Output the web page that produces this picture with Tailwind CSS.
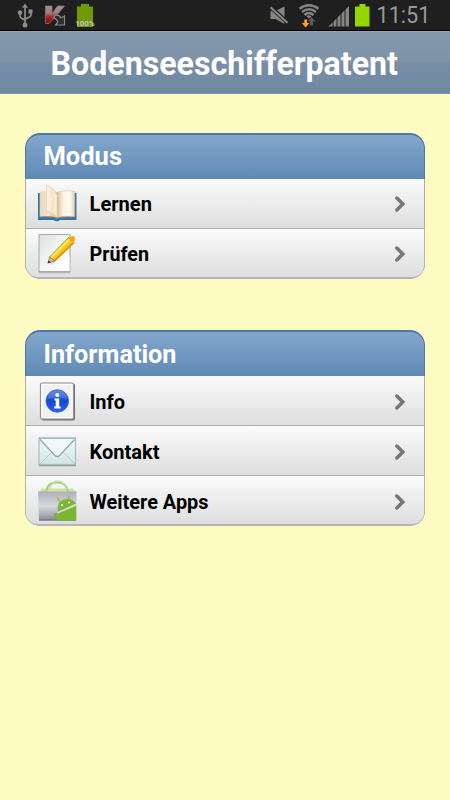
<!DOCTYPE html>
<html lang="de">
<head>
    <meta charset="UTF-8">
    <meta name="viewport" content="width=device-width, initial-scale=1.0">
    <title>Bodenseeschifferpatent</title>
    <script src="https://cdn.jsdelivr.net/npm/@tailwindcss/browser@4"></script>
</head>
<body class="bg-[#fdfbc2] font-[Roboto,sans-serif] h-[800px] overflow-hidden">
    <!-- Status bar -->
    <div class="h-[31px] bg-[#1f1f1f] border-b border-black flex items-center justify-between">
        <svg class="w-[110px] h-[30px]" viewBox="0 0 110 30">
            <g fill="none" stroke="#8c8c8c" stroke-width="1.7">
                <path d="M25 7v17M20 13v3q0 2 5 4M31 12v3q0 2-6 4"/>
            </g>
            <path d="M25 3.500l3 4.300h-6z" fill="#8c8c8c"/>
            <circle cx="25" cy="25" r="2.500" fill="#8c8c8c"/>
            <circle cx="20" cy="12.500" r="2.300" fill="#8c8c8c"/>
            <path d="M28.500 9.500h4v4h-4z" fill="#8c8c8c"/>
            <defs>
                <linearGradient id="kas" x1="0" y1="0" x2="0" y2="1">
                    <stop offset="0" stop-color="#a29292"/>
                    <stop offset="0.4" stop-color="#a77a7a"/>
                    <stop offset="0.65" stop-color="#a91c1c"/>
                    <stop offset="1" stop-color="#8c1010"/>
                </linearGradient>
            </defs>
            <path d="M45.500 6h6.500v8L57.500 6h7l-8 9.500-7.500 8h-3.500z" fill="url(#kas)" stroke="#858080" stroke-width=".7"/>
            <path d="M55 15.500q4-1.500 6 2.500l3.500-2v9h-9l2.500-3q-2-4-4.500-3.500z" fill="#2b2b2b" stroke="#8a8a8a" stroke-width="1.200"/>
            <path d="M81 4h8v2.500h4V27H77V6.500h4z" fill="#6e9a08"/>
            <text x="75.300" y="26.300" font-size="7" font-weight="700" fill="#c4c4c4" textLength="19.400" lengthAdjust="spacingAndGlyphs">100%</text>
        </svg>
        <svg class="w-[190px] h-[30px]" viewBox="260 0 190 30">
            <path d="M270.500 11h5l9-4.500v17.500l-9-5h-5z" fill="#858585"/>
            <path d="M270 6.500L287.500 22.500" stroke="#1f1f1f" stroke-width="4"/>
            <path d="M270.500 7.300L287.500 22.700" stroke="#8a8a8a" stroke-width="2"/>
            <g fill="none" stroke="#858585" stroke-width="2.400">
                <path d="M299.500 8.800q9.500-7 19 0"/>
                <path d="M302 12q7-5.500 14 0"/>
                <path d="M304.500 15q4.500-4 9 0"/>
            </g>
            <path d="M306.500 16.200q2.500-2 5 0l-2.500 2.300z" fill="#858585"/>
            <path d="M304.300 19.500h2.800v3.500h2.400L305.700 27.500l-4-4.500h2.600z" fill="#ff9d28"/>
            <path d="M311.500 17.300l3.800 4h-2.400v4h-2.800v-4h-2.300z" fill="#606060"/>
            <path d="M328.500 26.500L349 6v20.500z" fill="#858585"/>
            <path d="M333 19v8M337 15v12M341 11v16M345 7v20" stroke="#1f1f1f" stroke-width="1"/>
            <path d="M359.500 4h6v2.500h4V26.500H355V6.500h4.500z" fill="#94d600"/>
            <text x="376.500" y="23.300" font-size="23" font-weight="400" fill="#989898" textLength="54" lengthAdjust="spacingAndGlyphs">11:51</text>
        </svg>
    </div>

    <!-- Title bar -->
    <header class="h-[63px] border-t border-t-[#95a3b4] border-b border-b-[#8295ab] relative">
        <div class="h-[31px] bg-linear-to-b from-[#8498ac] to-[#7e93a9]"></div>
        <div class="h-[30px] bg-linear-to-b from-[#778da6] to-[#7189a3]"></div>
        <svg class="absolute inset-0 w-[450px] h-[62px]" viewBox="0 0 450 62">
            <text x="50.500" y="43.200" font-size="33" font-weight="700" fill="#fff" textLength="347.500" lengthAdjust="spacingAndGlyphs">Bodenseeschifferpatent</text>
        </svg>
    </header>

    <main class="px-[25px] pt-[39px]">
        <section class="mb-[51px] rounded-[15px] overflow-hidden bg-[#b5b5b7]">
            <h2 class="h-[46px] rounded-t-[15px] border border-b-0 border-t-2 border-[#4c78a8] bg-linear-to-b from-[#83a8ce] to-[#6089b4]">
                <svg class="w-[300px] h-[44px]" viewBox="0 0 300 44"><text x="17.500" y="30.200" font-size="25" font-weight="700" fill="#fff" textLength="78.500" lengthAdjust="spacingAndGlyphs">Modus</text></svg>
            </h2>
            <div class="h-[50px] border-x border-b border-[#acacae] bg-linear-to-b from-[#fbfbfb] to-[#dedede] flex items-center pl-[6px] pr-[17px]">
                <svg class="w-[50px] h-[49px]" viewBox="0 0 50 49">
                    <defs>
                        <linearGradient id="pageL"><stop offset="0" stop-color="#ead6b8"/><stop offset=".5" stop-color="#f4e7d1"/><stop offset="1" stop-color="#d6bc96"/></linearGradient>
                        <linearGradient id="pageR"><stop offset="0" stop-color="#d9bd92"/><stop offset=".35" stop-color="#fbf3e4"/><stop offset=".75" stop-color="#fffaf0"/><stop offset="1" stop-color="#e5cba4"/></linearGradient>
                        <linearGradient id="leaf"><stop offset="0" stop-color="#fff6e6"/><stop offset=".6" stop-color="#f5e3c9"/><stop offset="1" stop-color="#fff4df"/></linearGradient>
                    </defs>
                    <path d="M6 14h38.500v27H28q-3 2.500-6.500 0H6z" fill="#2879ae"/>
                    <path d="M7.700 36h35v2.800H28l-3 1.500-3.500-1.500H7.700z" fill="#8b7663"/>
                    <path d="M7.700 12.500q10-1 17.300 1V38.500q-8-2-17.300-1z" fill="url(#pageL)"/>
                    <path d="M25 13.500q7-3 17.700-1V37.500q-10-1-17.700 1z" fill="url(#pageR)" stroke="#d9bd94" stroke-width=".6"/>
                    <path d="M14.500 6.500q8 2 10.500 10V38q-4-4-10.500-6z" fill="url(#leaf)" stroke="#e2caa5" stroke-width=".7"/>
                </svg>
                <svg class="w-[300px] h-[49px]" viewBox="0 0 300 49"><text x="7.500" y="32.300" font-size="20" font-weight="700" fill="#000" textLength="62.500" lengthAdjust="spacingAndGlyphs">Lernen</text></svg>
                <svg class="w-[14px] h-[18px] mt-px ml-auto" viewBox="0 0 14 18"><path d="M3.800 3l6 6-6 6" fill="none" stroke="#777" stroke-width="3.500" stroke-linecap="round"/></svg>
            </div>
            <div class="h-[50px] rounded-b-[13px] border-x border-b-2 border-[#b5b5b7] bg-linear-to-b from-[#fbfbfb] to-[#dedede] flex items-center pl-[6px] pr-[17px]">
                <svg class="w-[50px] h-[48px]" viewBox="0 0 50 48">
                    <defs>
                        <linearGradient id="sheet" x2="1" y2="1"><stop offset="0" stop-color="#dce0df"/><stop offset=".5" stop-color="#f4f5f5"/><stop offset="1" stop-color="#fff"/></linearGradient>
                    </defs>
                    <path d="M6.500 43.500h32" stroke="#b5b5b5" stroke-width="1.500"/>
                    <path d="M7 5.500h31v37H7z" fill="url(#sheet)" stroke="#a5a9a8"/>
                    <path d="M23 42q3-8 14.500-14v14z" fill="#fff"/>
                    <path d="M18 34L42 12" stroke="#888" stroke-opacity=".3" stroke-width="5"/>
                    <path d="M17.500 28L36.500 8.500l5 5.300L23 32z" fill="#f7c41b" stroke="#bd8610" stroke-width=".7"/>
                    <path d="M18.500 28L37 9.500l1.500 1.500L20 29.500z" fill="#ffe76b"/>
                    <path d="M21.500 31.500l19-18 1 1L23 32.500z" fill="#df9700"/>
                    <path d="M36 9.500l3.500-2.200q2.500-1 3.700 2.200l-2 4.500z" fill="#edaa05"/>
                    <path d="M17.500 28l5.500 4-7 2z" fill="#d8bd83" stroke="#876b42" stroke-width=".6"/>
                    <path d="M16.500 31.500l2.500 1.700-3.500 1.300z" fill="#333"/>
                </svg>
                <svg class="w-[300px] h-[48px]" viewBox="0 0 300 48"><text x="7.500" y="32" font-size="20" font-weight="700" fill="#000" textLength="59.500" lengthAdjust="spacingAndGlyphs">Prüfen</text></svg>
                <svg class="w-[14px] h-[18px] mt-px ml-auto" viewBox="0 0 14 18"><path d="M3.800 3l6 6-6 6" fill="none" stroke="#777" stroke-width="3.500" stroke-linecap="round"/></svg>
            </div>
        </section>

        <section class="rounded-[15px] overflow-hidden bg-[#b5b5b7]">
            <h2 class="h-[46px] rounded-t-[15px] border border-b-0 border-t-2 border-[#4c78a8] bg-linear-to-b from-[#83a8ce] to-[#6089b4]">
                <svg class="w-[300px] h-[44px]" viewBox="0 0 300 44"><text x="17.500" y="30.700" font-size="25" font-weight="700" fill="#fff" textLength="133" lengthAdjust="spacingAndGlyphs">Information</text></svg>
            </h2>
            <div class="h-[50px] border-x border-b border-[#acacae] bg-linear-to-b from-[#fbfbfb] to-[#dedede] flex items-center pl-[6px] pr-[17px]">
                <svg class="w-[50px] h-[49px]" viewBox="0 0 50 49">
                    <defs>
                        <linearGradient id="ball" x2="0" y2="1"><stop offset="0" stop-color="#4c7cec"/><stop offset=".5" stop-color="#1747d2"/><stop offset="1" stop-color="#2862ee"/></linearGradient>
                    </defs>
                    <rect x="9" y="7.500" width="34" height="37" rx="2" fill="#707070"/>
                    <rect x="8.500" y="7" width="33" height="36" rx="1.500" fill="#f1f1f1" stroke="#929292" stroke-width="1.200"/>
                    <rect x="10" y="8.500" width="30" height="33" fill="none" stroke="#fff"/>
                    <circle cx="25.300" cy="25" r="11.300" fill="url(#ball)" stroke="#4168c7" stroke-width=".8"/>
                    <path d="M15.500 23q1-8.500 9.800-8.500T35 23q-9-3-19.500 0z" fill="#7da2f5" fill-opacity=".35"/>
                    <circle cx="25.300" cy="19" r="2" fill="#fff"/>
                    <path d="M22.500 22.500h4.700v8h1.500v2h-6.500v-2h1.500v-6h-1.200z" fill="#fff"/>
                </svg>
                <svg class="w-[300px] h-[49px]" viewBox="0 0 300 49"><text x="7.500" y="32.500" font-size="20" font-weight="700" fill="#000" textLength="35.500" lengthAdjust="spacingAndGlyphs">Info</text></svg>
                <svg class="w-[14px] h-[18px] mt-[2px] ml-auto" viewBox="0 0 14 18"><path d="M3.800 3l6 6-6 6" fill="none" stroke="#777" stroke-width="3.500" stroke-linecap="round"/></svg>
            </div>
            <div class="h-[50px] border-x border-b border-[#acacae] bg-linear-to-b from-[#fbfbfb] to-[#dedede] flex items-center pl-[6px] pr-[17px]">
                <svg class="w-[50px] h-[49px]" viewBox="0 0 50 49">
                    <defs>
                        <linearGradient id="mail" x2="0" y2="1"><stop offset="0" stop-color="#f2fafa"/><stop offset="1" stop-color="#d2e4e4"/></linearGradient>
                    </defs>
                    <path d="M7 39.500h37" stroke="#929f9f" stroke-width="1.500"/>
                    <rect x="7" y="12" width="36.500" height="26.500" fill="url(#mail)" stroke="#a6bbbb" stroke-width="1.200"/>
                    <path d="M8 38l12-12M43 38L31 26" fill="none" stroke="#b8cccc"/>
                    <path d="M7.500 13L23 29.500q2.300 2 4.600 0L43 13z" fill="#f0f8f8"/>
                    <path d="M8 13.500L23 29.500q2.300 2 4.600 0L42.500 13.500" fill="none" stroke="#95a9a9" stroke-width="1.300"/>
                    <path d="M7 12.200h37" stroke="#a5bdbb" stroke-width="1.500"/>
                </svg>
                <svg class="w-[300px] h-[49px]" viewBox="0 0 300 49"><text x="7.500" y="32.500" font-size="20" font-weight="700" fill="#000" textLength="70" lengthAdjust="spacingAndGlyphs">Kontakt</text></svg>
                <svg class="w-[14px] h-[18px] mt-[2px] ml-auto" viewBox="0 0 14 18"><path d="M3.800 3l6 6-6 6" fill="none" stroke="#777" stroke-width="3.500" stroke-linecap="round"/></svg>
            </div>
            <div class="h-[50px] rounded-b-[13px] border-x border-b-2 border-[#b5b5b7] bg-linear-to-b from-[#fbfbfb] to-[#dedede] flex items-center pl-[6px] pr-[17px]">
                <svg class="w-[50px] h-[48px]" viewBox="0 0 50 48">
                    <defs>
                        <linearGradient id="bag" x2="0" y2="1"><stop offset="0" stop-color="#b0b0b8"/><stop offset=".5" stop-color="#d6d6de"/><stop offset=".75" stop-color="#b5b5bd"/><stop offset="1" stop-color="#85858f"/></linearGradient>
                        <clipPath id="bagClip"><path d="M6 17h38.500v27.500H6z"/></clipPath>
                    </defs>
                    <path d="M10 12.500h30.500l3.500 3.500h-37z" fill="#c9e79c"/>
                    <path d="M14 16q1-9.500 11-9.500t11 9.500" fill="none" stroke="#a5ce78" stroke-width="2"/>
                    <path d="M17 14q3-9 9-9t9 9" fill="none" stroke="#c5dfa6" stroke-width="1.500"/>
                    <path d="M6 15.500h38.500l-.5 29H7z" fill="url(#bag)"/>
                    <path d="M7 44h37" stroke="#75757a"/>
                    <g clip-path="url(#bagClip)">
                        <path d="M26 35.500Q24 26 32 23.500q8-2 12 4z" fill="#7cb832"/>
                        <path d="M28 25.500l-3-4M36.500 24l.5-4" stroke="#7cb832" stroke-width="1.200"/>
                        <circle cx="30" cy="29" r="1" fill="#fff"/>
                        <circle cx="37" cy="26.500" r="1" fill="#fff"/>
                        <path d="M26.500 37.500L44.500 29.500V44.500H29.500z" fill="#78b72e"/>
                        <path d="M23.500 38.500l4 6" stroke="#78b72e" stroke-width="3.500" stroke-linecap="round"/>
                        <path d="M26 36.700L44.500 28.700" stroke="#d8e8c5" stroke-width="1"/>
                    </g>
                </svg>
                <svg class="w-[300px] h-[48px]" viewBox="0 0 300 48"><text x="7.500" y="32.500" font-size="20" font-weight="700" fill="#000" textLength="119" lengthAdjust="spacingAndGlyphs">Weitere Apps</text></svg>
                <svg class="w-[14px] h-[18px] mt-[3px] ml-auto" viewBox="0 0 14 18"><path d="M3.800 3l6 6-6 6" fill="none" stroke="#777" stroke-width="3.500" stroke-linecap="round"/></svg>
            </div>
        </section>
    </main>
</body>
</html>
